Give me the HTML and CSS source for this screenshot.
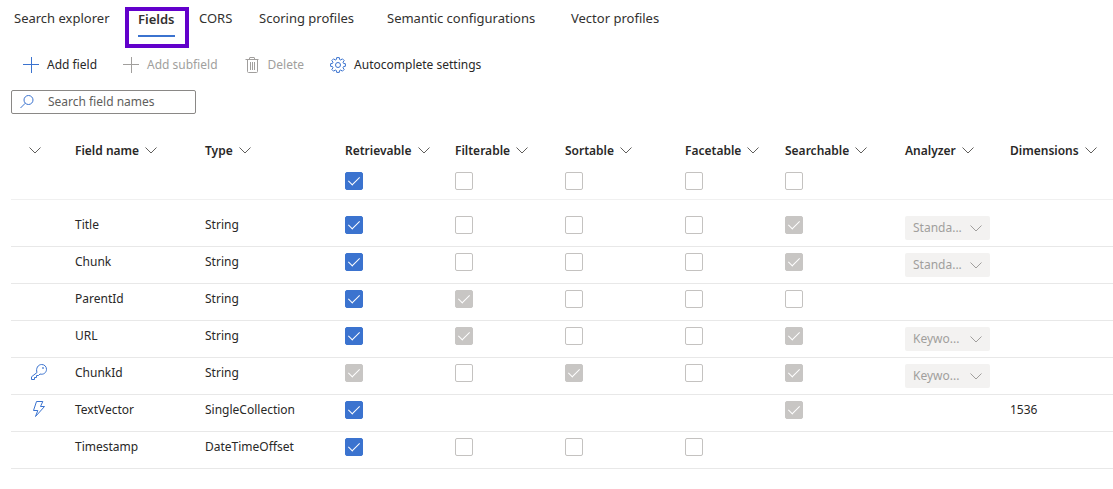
FILE: index.html
```
<!DOCTYPE html>
<html lang="en">
  <head>
    <meta charset="UTF-8" />
    <meta name="viewport" content="width=device-width, initial-scale=1.0" />
    <title>Index fields</title>
    <link rel="stylesheet" href="styles.css">
  </head>
  <body>
    <!-- shared icons -->
    <svg class="sprite" aria-hidden="true">
      <symbol id="chevron" viewBox="0 0 12 7">
        <path d="M0.5 0.5 L6 6 L11.5 0.5" />
      </symbol>
      <symbol id="plus" viewBox="0 0 16 16">
        <path d="M8.5 0v16M0 7.5h16" />
      </symbol>
      <symbol id="trash" viewBox="0 0 16 16">
        <path d="M1.5 2.5h13M5.5 2.5v-1.5a.5.5 0 0 1 .5-.5h4a.5.5 0 0 1 .5.5v1.5M3.500 2.500v12a1 1 0 0 0 1 1h8a1 1 0 0 0 1-1v-12M6.500 5v8M8.500 5v8M10.500 5v8" />
      </symbol>
      <symbol id="gear" viewBox="0 0 16 16">
        <path d="M6.700 0.600h2.600l.3 1.900 1.200.5 1.600-1.200 1.800 1.800-1.200 1.600.5 1.200 1.900.3v2.600l-1.900.3-.5 1.200 1.200 1.600-1.800 1.800-1.600-1.200-1.200.5-.3 1.900h-2.600l-.3-1.900-1.200-.5-1.600 1.200-1.800-1.800 1.200-1.600-.5-1.200-1.900-.3v-2.600l1.900-.3.5-1.200-1.200-1.600 1.800-1.800 1.600 1.200 1.200-.5z" />
        <circle cx="8" cy="8" r="2.500" />
      </symbol>
      <symbol id="search" viewBox="0 0 16 16">
        <circle cx="9.500" cy="6" r="4.500" />
        <path d="M6.300 9.200L1.500 14" />
      </symbol>
      <symbol id="key" viewBox="0 0 16 16">
        <path d="M6 8.500C4.600 4.500 7 .5 10.700.5c2.800 0 4.800 2.100 4.800 4.800 0 3.500-3.300 5.700-6.500 4.700L7.500 11.500h-2v2h-2v2h-3v-2.700z" />
        <circle cx="12" cy="4" r="0.500" />
      </symbol>
      <symbol id="bolt" viewBox="0 0 16 16">
        <path d="M5.500.5h6.300L9.500 5.500h4L4.500 15.500 6.800 9.500H2.500z" />
      </symbol>
    </svg>

    <nav class="tabs">
      <a href="#" class="tab">Search explorer</a>
      <a href="#" class="tab active">Fields</a>
      <a href="#" class="tab">CORS</a>
      <a href="#" class="tab">Scoring profiles</a>
      <a href="#" class="tab">Semantic configurations</a>
      <a href="#" class="tab">Vector profiles</a>
    </nav>

    <div class="toolbar">
      <button type="button"><svg class="icon"><use href="#plus" /></svg>Add field</button>
      <button type="button" disabled><svg class="icon"><use href="#plus" /></svg>Add subfield</button>
      <button type="button" disabled><svg class="icon"><use href="#trash" /></svg>Delete</button>
      <button type="button"><svg class="icon"><use href="#gear" /></svg>Autocomplete settings</button>
    </div>

    <label class="search">
      <svg class="icon"><use href="#search" /></svg>
      <input type="text" placeholder="Search field names" aria-label="Search field names">
    </label>

    <table class="fields">
      <colgroup>
        <col class="col-icon">
        <col class="col-name">
        <col class="col-type">
        <col class="col-retrievable">
        <col class="col-filterable">
        <col class="col-sortable">
        <col class="col-facetable">
        <col class="col-searchable">
        <col class="col-analyzer">
        <col>
      </colgroup>
      <thead>
        <tr class="titles">
          <th class="mark"><svg class="chevron"><use href="#chevron" /></svg></th>
          <th>Field name<svg class="chevron"><use href="#chevron" /></svg></th>
          <th>Type<svg class="chevron"><use href="#chevron" /></svg></th>
          <th>Retrievable<svg class="chevron"><use href="#chevron" /></svg></th>
          <th>Filterable<svg class="chevron"><use href="#chevron" /></svg></th>
          <th>Sortable<svg class="chevron"><use href="#chevron" /></svg></th>
          <th>Facetable<svg class="chevron"><use href="#chevron" /></svg></th>
          <th>Searchable<svg class="chevron"><use href="#chevron" /></svg></th>
          <th>Analyzer<svg class="chevron"><use href="#chevron" /></svg></th>
          <th>Dimensions<svg class="chevron"><use href="#chevron" /></svg></th>
        </tr>
        <tr class="toggles">
          <td></td>
          <td></td>
          <td></td>
          <td><input type="checkbox" aria-label="All retrievable" checked></td>
          <td><input type="checkbox" aria-label="All filterable"></td>
          <td><input type="checkbox" aria-label="All sortable"></td>
          <td><input type="checkbox" aria-label="All facetable"></td>
          <td><input type="checkbox" aria-label="All searchable"></td>
          <td></td>
          <td></td>
        </tr>
      </thead>
      <tbody>
        <tr class="spacer"><td colspan="10"></td></tr>
        <tr>
          <td class="mark"></td>
          <td>Title</td>
          <td>String</td>
          <td><input type="checkbox" aria-label="Title retrievable" checked></td>
          <td><input type="checkbox" aria-label="Title filterable"></td>
          <td><input type="checkbox" aria-label="Title sortable"></td>
          <td><input type="checkbox" aria-label="Title facetable"></td>
          <td><input type="checkbox" aria-label="Title searchable" checked disabled></td>
          <td><span class="dropdown"><select aria-label="Title analyzer" disabled><option>Standa...</option></select><svg class="chevron"><use href="#chevron" /></svg></span></td>
          <td></td>
        </tr>
        <tr>
          <td class="mark"></td>
          <td>Chunk</td>
          <td>String</td>
          <td><input type="checkbox" aria-label="Chunk retrievable" checked></td>
          <td><input type="checkbox" aria-label="Chunk filterable"></td>
          <td><input type="checkbox" aria-label="Chunk sortable"></td>
          <td><input type="checkbox" aria-label="Chunk facetable"></td>
          <td><input type="checkbox" aria-label="Chunk searchable" checked disabled></td>
          <td><span class="dropdown"><select aria-label="Chunk analyzer" disabled><option>Standa...</option></select><svg class="chevron"><use href="#chevron" /></svg></span></td>
          <td></td>
        </tr>
        <tr>
          <td class="mark"></td>
          <td>ParentId</td>
          <td>String</td>
          <td><input type="checkbox" aria-label="ParentId retrievable" checked></td>
          <td><input type="checkbox" aria-label="ParentId filterable" checked disabled></td>
          <td><input type="checkbox" aria-label="ParentId sortable"></td>
          <td><input type="checkbox" aria-label="ParentId facetable"></td>
          <td><input type="checkbox" aria-label="ParentId searchable"></td>
          <td></td>
          <td></td>
        </tr>
        <tr>
          <td class="mark"></td>
          <td>URL</td>
          <td>String</td>
          <td><input type="checkbox" aria-label="URL retrievable" checked></td>
          <td><input type="checkbox" aria-label="URL filterable" checked disabled></td>
          <td><input type="checkbox" aria-label="URL sortable"></td>
          <td><input type="checkbox" aria-label="URL facetable"></td>
          <td><input type="checkbox" aria-label="URL searchable" checked disabled></td>
          <td><span class="dropdown"><select aria-label="URL analyzer" disabled><option>Keywo...</option></select><svg class="chevron"><use href="#chevron" /></svg></span></td>
          <td></td>
        </tr>
        <tr>
          <td class="mark"><svg class="icon"><use href="#key" /></svg></td>
          <td>ChunkId</td>
          <td>String</td>
          <td><input type="checkbox" aria-label="ChunkId retrievable" checked disabled></td>
          <td><input type="checkbox" aria-label="ChunkId filterable"></td>
          <td><input type="checkbox" aria-label="ChunkId sortable" checked disabled></td>
          <td><input type="checkbox" aria-label="ChunkId facetable"></td>
          <td><input type="checkbox" aria-label="ChunkId searchable" checked disabled></td>
          <td><span class="dropdown"><select aria-label="ChunkId analyzer" disabled><option>Keywo...</option></select><svg class="chevron"><use href="#chevron" /></svg></span></td>
          <td></td>
        </tr>
        <tr>
          <td class="mark"><svg class="icon"><use href="#bolt" /></svg></td>
          <td>TextVector</td>
          <td>SingleCollection</td>
          <td><input type="checkbox" aria-label="TextVector retrievable" checked></td>
          <td></td>
          <td></td>
          <td></td>
          <td><input type="checkbox" aria-label="TextVector searchable" checked disabled></td>
          <td></td>
          <td>1536</td>
        </tr>
        <tr>
          <td class="mark"></td>
          <td>Timestamp</td>
          <td>DateTimeOffset</td>
          <td><input type="checkbox" aria-label="Timestamp retrievable" checked></td>
          <td><input type="checkbox" aria-label="Timestamp filterable"></td>
          <td><input type="checkbox" aria-label="Timestamp sortable"></td>
          <td><input type="checkbox" aria-label="Timestamp facetable"></td>
          <td></td>
          <td></td>
          <td></td>
        </tr>
      </tbody>
    </table>
  </body>
</html>
```
FILE: styles.css
```
* {
  box-sizing: border-box;
  margin: 0;
  padding: 0;
}
body {
  padding: 7px 0 0 11px;
  background: #fff;
  color: #292827;
  font: 12px/18px "Segoe UI", "Noto Sans", sans-serif;
}
button,
input,
select {
  font: inherit;
  color: inherit;
}
.sprite {
  display: none;
}
.icon,
.chevron {
  flex: none;
  fill: none;
  stroke: currentColor;
}
.icon {
  width: 16px;
  height: 16px;
  color: #3b73cf;
}
.chevron {
  width: 12px;
  height: 7px;
  color: #605e5c;
}

/* tabs */
.tabs {
  display: grid;
  grid-template-columns: 114px 71px 60px 128px 184px auto;
  height: 41px;
  font-size: 13px;
}
.tab {
  padding: 2px 0 0 3px;
  color: #323130;
  text-decoration: none;
  white-space: nowrap;
}
.tab.active {
  justify-self: start;
  width: 64px;
  padding: 0 9px;
  border: 4px solid #6200cb;
  font-weight: 600;
  line-height: 16px;
}
.tab.active::after {
  content: "";
  display: block;
  width: 37px;
  height: 2px;
  margin-top: 8px;
  background: #3b73cf;
}

/* toolbar */
.toolbar {
  display: flex;
  gap: 26px;
  padding: 8px 0 0 12px;
}
.toolbar button {
  display: flex;
  align-items: center;
  gap: 8px;
  border: 0;
  background: none;
  white-space: nowrap;
}
.toolbar button:disabled,
.toolbar button:disabled .icon {
  color: #a19f9d;
}

.search {
  display: flex;
  align-items: center;
  width: 185px;
  height: 24px;
  margin-top: 16px;
  padding-left: 7px;
  border: 1px solid #8a8886;
  border-radius: 2px;
}
.search input {
  width: 100%;
  padding-left: 13px;
  border: 0;
  outline: 0;
  background: none;
}
.search input::placeholder {
  color: #605e5c;
}

/* fields table */
.fields {
  width: 100%;
  margin-top: 24px;
  border-collapse: separate;
  border-spacing: 0;
  table-layout: fixed;
}
.col-icon {
  width: 64px;
}
.col-name {
  width: 130px;
}
.col-type {
  width: 140px;
}
.col-retrievable,
.col-filterable {
  width: 110px;
}
.col-sortable,
.col-searchable {
  width: 120px;
}
.col-facetable {
  width: 100px;
}
.col-analyzer {
  width: 105px;
}
.fields th,
.fields td {
  text-align: left;
  vertical-align: top;
  white-space: nowrap;
}
.fields th {
  height: 34px;
  padding-top: 4px;
  font-weight: 600;
}
.fields th .chevron {
  margin: 0 0 1px 6px;
}
.fields th.mark .chevron {
  margin-left: 18px;
}
.fields td {
  height: 37px;
  padding-top: 6px;
  border-bottom: 1px solid #e8e8e8;
}
.fields td.mark {
  padding-left: 20px;
}
.fields .toggles td {
  height: 28px;
  padding-top: 0;
  border-color: #f0f0f0;
}
.fields .spacer td {
  height: 10px;
  padding: 0;
  border: 0;
}
.fields svg.icon {
  display: block;
}

input[type="checkbox"] {
  display: block;
  position: relative;
  width: 18px;
  height: 18px;
  border: 1px solid #c4c2c0;
  border-radius: 2px;
  background: #fff;
  appearance: none;
}
input[type="checkbox"]:checked {
  border-color: #3b73cf;
  background: #3b73cf;
}
input[type="checkbox"]:checked:disabled {
  border-color: #c8c6c4;
  background: #c8c6c4;
}
input[type="checkbox"]:checked::before {
  content: "";
  position: absolute;
  top: 1px;
  left: 5px;
  width: 5px;
  height: 10px;
  border: solid #fff;
  border-width: 0 1px 1px 0;
  transform: rotate(45deg);
}

.dropdown {
  display: grid;
  align-items: center;
  width: 85px;
  height: 24px;
  border-radius: 2px;
  background: #f3f2f1;
}
.dropdown select,
.dropdown .chevron {
  grid-area: 1 / 1;
}
.dropdown select {
  width: 100%;
  padding-left: 8px;
  border: 0;
  background: none;
  color: #a19f9d;
  opacity: 1;
  appearance: none;
}
.dropdown .chevron {
  justify-self: end;
  margin-right: 8px;
  color: #a19f9d;
  pointer-events: none;
}
```
